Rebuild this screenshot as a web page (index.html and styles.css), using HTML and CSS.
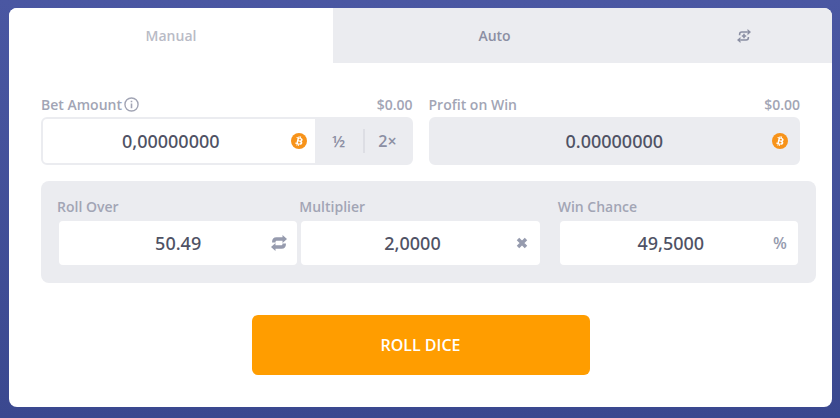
FILE: index.html
```html
<!DOCTYPE html>
<html lang="en">
<head>
<meta charset="utf-8">
<meta name="viewport" content="width=device-width, initial-scale=1">
<title>Dice</title>
<link rel="stylesheet" href="styles.css">
</head>
<body>
<svg class="symbols">
  <symbol id="coin" viewBox="0 0 32 32">
    <circle cx="16" cy="16" r="16" fill="#f7931a"/>
    <path fill="#fff" d="M23.2 14c.3-2.100-1.300-3.300-3.500-4l.7-2.900-1.700-.4-.7 2.800-1.400-.3.7-2.800-1.700-.5-.7 2.900-3.500-.9-.5 1.900 1.300.3c.7.2.8.6.8 1l-2 7.900c-.1.200-.3.600-.8.400l-1.300-.3-.8 2 3.300.8-.7 2.900 1.700.5.7-2.900 1.400.4-.7 2.800 1.700.5.7-2.900c3 .6 5.200.3 6.200-2.400.7-2.100 0-3.400-1.600-4.200 1.200-.2 2-1 2.400-2.600zm-4 5.600c-.5 2.200-4.200 1-5.400.7l1-3.900c1.200.3 4.900.9 4.400 3.200zm.6-5.600c-.5 2-3.600 1-4.600.7l.9-3.500c1 .3 4.200.7 3.700 2.800z"/>
  </symbol>
</svg>
<main class="card">
  <nav class="tabs">
    <button class="tab tab-active" type="button">Manual</button>
    <button class="tab" type="button">Auto</button>
    <button class="tab" type="button" aria-label="Advanced">
      <svg class="icon" viewBox="0 0 16 16" fill="none" stroke="currentColor" stroke-width="1.800">
        <path d="M3 7V6Q3 3.500 5.500 3.500H12M13 9v1Q13 12.500 10.500 12.500H4M8 5.500v5M5.500 8h5"/>
        <path fill="currentColor" stroke="none" d="M12 0 16 3.500 12 7zM4 9 0 12.500 4 16z"/>
      </svg>
    </button>
  </nav>
  <form class="body">
    <div class="row">
      <div class="field">
        <div class="caption">
          <label for="bet">Bet Amount</label>
          <svg class="info" viewBox="0 0 16 16" fill="none" stroke="currentColor">
            <circle cx="8" cy="8" r="7" stroke-width="1.500"/>
            <path stroke-width="1.700" d="M8 7v5M8 4v1.600"/>
          </svg>
          <span class="amount">$0.00</span>
        </div>
        <div class="box">
          <input class="number bet" id="bet" type="text" value="0,00000000">
          <svg class="mark mark-bet"><use href="#coin"/></svg>
          <div class="steps">
            <button class="step" type="button">½</button>
            <button class="step" type="button">2×</button>
          </div>
        </div>
      </div>
      <div class="field">
        <div class="caption">
          <label for="profit">Profit on Win</label>
          <span class="amount">$0.00</span>
        </div>
        <div class="box">
          <input class="readonly" id="profit" type="text" value="0.00000000" readonly>
          <svg class="mark"><use href="#coin"/></svg>
        </div>
      </div>
    </div>
    <div class="panel">
      <div class="field">
        <div class="caption"><label for="roll">Roll Over</label></div>
        <div class="box">
          <input id="roll" type="text" value="50.49">
          <svg class="mark" viewBox="0 0 16 16" fill="none" stroke="currentColor" stroke-width="3.500">
            <path d="M2.800 7.500V7Q2.800 4 5.500 4H12M13.200 8.500V9Q13.200 12 10.500 12H4"/>
            <path fill="currentColor" stroke="none" d="M11.500 0 16 4 11.500 8zM4.500 8 0 12 4.500 16z"/>
          </svg>
        </div>
      </div>
      <div class="field">
        <div class="caption"><label for="multiplier">Multiplier</label></div>
        <div class="box">
          <input class="number" id="multiplier" type="text" value="2,0000">
          <svg class="mark" viewBox="0 0 16 16" stroke="currentColor" stroke-width="3.500">
            <path d="M4 4l8 8M12 4l-8 8"/>
          </svg>
        </div>
      </div>
      <div class="field field-chance">
        <div class="caption"><label for="chance">Win Chance</label></div>
        <div class="box">
          <input class="number" id="chance" type="text" value="49,5000">
          <span class="mark">%</span>
        </div>
      </div>
    </div>
    <button class="roll" type="button">ROLL DICE</button>
  </form>
</main>
</body>
</html>
```
FILE: styles.css
```css
* { box-sizing: border-box; }

body {
  margin: 0;
  min-height: 100vh;
  padding: 8px 8px 11px 9px;
  display: flex;
  background: linear-gradient(#4a57a2, #3a488f);
  font-family: "Open Sans", "Noto Sans", sans-serif;
  font-size: 14px;
  font-weight: 600;
  color: #a2a5b5;
}

button, input {
  font: inherit;
  color: inherit;
  border: 0;
  padding: 0;
  margin: 0;
  background: none;
}

.symbols { display: none; }

.card {
  flex: 1;
  background: #fff;
  border-radius: 8px;
  overflow: hidden;
}

.tabs {
  display: grid;
  grid-template-columns: 324fr 323fr 176fr;
  height: 55px;
}

.tab {
  display: flex;
  align-items: center;
  justify-content: center;
  background: #ebecf0;
  color: #8b8fa3;
}

.tab-active {
  background: #fff;
  color: #b9bbc6;
}

.icon { width: 14px; height: 14px; }

.body {
  display: flex;
  flex-direction: column;
  gap: 16px;
  padding: 32px 16px 32px 32px;
}

.row {
  display: flex;
  gap: 16px;
  padding-right: 16px;
}

.field { flex: 1; min-width: 0; }

.caption {
  display: flex;
  align-items: center;
  height: 22px;
  padding-bottom: 4px;
}

.info { width: 15px; height: 15px; margin-left: 2px; }

.amount { margin-left: auto; }

.box {
  position: relative;
  display: flex;
  height: 48px;
  border: 2px solid #ebecf0;
  border-radius: 6px;
  background: #ebecf0;
}

.box input {
  flex: 1;
  width: 100%;
  min-width: 0;
  background: #fff;
  border-radius: 4px;
  color: #4f5264;
  font-family: "Noto Sans", sans-serif;
  font-size: 18px;
  font-weight: 500;
  text-align: center;
}

.box .number { padding-right: 16px; }

.box .bet { border-radius: 4px 0 0 4px; }

.box .readonly { background: none; }

.mark {
  position: absolute;
  top: 14px;
  right: 10px;
  width: 16px;
  height: 16px;
  font-size: 16px;
  line-height: 16px;
  text-align: center;
  color: #969bae;
}

.mark-bet { right: 104px; }

.steps {
  display: flex;
  align-items: center;
}

.step {
  width: 48px;
  height: 24px;
  color: #8b8fa3;
  font-size: 16px;
}

.step + .step { border-left: 2px solid #dddee4; }

.panel {
  display: flex;
  padding: 16px;
  background: #ebecf0;
  border-radius: 8px;
}

.field-chance { margin-left: 16px; }

.roll {
  align-self: center;
  width: 338px;
  max-width: 100%;
  height: 60px;
  margin: 16px 16px 0 0;
  border-radius: 6px;
  background: #ff9d00;
  color: #fff;
  font-size: 16px;
}
```
